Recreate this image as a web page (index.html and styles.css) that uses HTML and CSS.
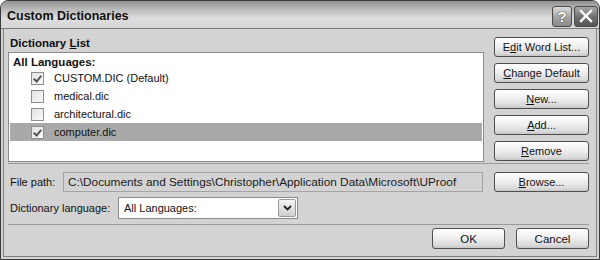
FILE: index.html
```html
<!DOCTYPE html>
<html lang="en">
<head>
  <meta charset="UTF-8" />
  <title>Custom Dictionaries</title>
  <link rel="stylesheet" href="styles.css">
</head>
<body>
  <div class="window">
    <!-- Title bar -->
    <div class="titlebar">
      <span class="title">Custom Dictionaries</span>
      <div class="title-buttons">
        <span class="tbtn help">?</span>
        <span class="tbtn close">
          <svg width="14" height="14" viewBox="0 0 14 14">
            <path d="M2 2 L12 12 M12 2 L2 12" stroke="#fff" stroke-width="2.4" stroke-linecap="square" fill="none"/>
          </svg>
        </span>
      </div>
    </div>

    <div class="frame">
      <div class="content">
        <!-- List and side buttons -->
        <div class="top">
          <div class="list-col">
            <div class="group-label">Dictionary <u>L</u>ist</div>
            <div class="listbox">
              <div class="list-head">All Languages:</div>
              <div class="item"><span class="check on"></span>CUSTOM.DIC (Default)</div>
              <div class="item"><span class="check"></span>medical.dic</div>
              <div class="item"><span class="check"></span>architectural.dic</div>
              <div class="item selected"><span class="check on"></span>computer.dic</div>
            </div>
          </div>
          <div class="btn-col">
            <button class="btn">E<u>d</u>it Word List...</button>
            <button class="btn"><u>C</u>hange Default</button>
            <button class="btn"><u>N</u>ew...</button>
            <button class="btn"><u>A</u>dd...</button>
            <button class="btn"><u>R</u>emove</button>
          </div>
        </div>

        <div class="sep"></div>

        <!-- File path -->
        <div class="field-row">
          <span class="lbl">File path:</span>
          <div class="path">C:\Documents and Settings\Christopher\Application Data\Microsoft\UProof</div>
          <button class="btn"><u>B</u>rowse...</button>
        </div>

        <!-- Language -->
        <div class="field-row lang">
          <span class="lbl">Dictionary language:</span>
          <div class="select">
            <span class="select-text">All Languages:</span>
            <span class="drop">
              <svg width="9" height="6" viewBox="0 0 9 6">
                <path d="M1 1 L4.5 4.5 L8 1" stroke="#222" stroke-width="1.8" fill="none"/>
              </svg>
            </span>
          </div>
        </div>

        <div class="sep low"></div>

        <!-- OK / Cancel -->
        <div class="actions">
          <button class="btn small">OK</button>
          <button class="btn small">Cancel</button>
        </div>
      </div>
    </div>
  </div>
</body>
</html>
```

FILE: styles.css
```css
/* Reset */
* {
  margin: 0;
  padding: 0;
  box-sizing: border-box;
}
body {
  background: #fff;
  font-family: 'Liberation Sans', Arial, sans-serif;
  font-size: 11px;
  color: #111;
}
u {
  text-decoration: underline;
  text-underline-offset: 1px;
}

/* Window */
.window {
  width: 600px;
  height: 260px;
  border: 1px solid #3a3a3a;
  border-radius: 8px 8px 0 0;
  overflow: hidden;
  display: flex;
  flex-direction: column;
  background: #d3d3d3;
}

/* Title bar */
.titlebar {
  height: 28px;
  flex-shrink: 0;
  border-bottom: 1px solid #7c7c7c;
  background: linear-gradient(to bottom, #8f8f8f 0%, #b9b9b9 30%, #dedede 65%, #d6d6d6 100%);
  display: flex;
  align-items: center;
  justify-content: space-between;
  padding: 0 1px 0 6px;
}
.title {
  font-weight: bold;
  font-size: 12.5px;
  color: #101010;
  padding-top: 2px;
}
.title-buttons {
  display: flex;
  gap: 2px;
  padding-top: 3px;
}
.tbtn {
  height: 21px;
  border: 1px solid #4a4a4a;
  border-radius: 3px;
  display: flex;
  align-items: center;
  justify-content: center;
}
.tbtn.help {
  width: 20px;
  background: linear-gradient(to bottom, #dcdcdc, #a4a4a4 55%, #8a8a8a);
  color: #fff;
  font-weight: bold;
  font-size: 15px;
  text-shadow: 0 0 1px #333, 0 0 1px #333;
}
.tbtn.close {
  width: 24px;
  background: linear-gradient(to bottom, #a8a8a8, #6e6e6e 55%, #555);
}

/* Frame */
.frame {
  flex: 1;
  padding: 0 2px 2px;
  display: flex;
}
.content {
  flex: 1;
  border: 1px solid #808080;
  border-top: none;
  padding: 7px 7px 0 4px;
}

/* Top area */
.top {
  display: flex;
  gap: 10px;
}
.list-col {
  flex: 1;
}
.group-label {
  font-weight: bold;
  font-size: 11.5px;
  line-height: 14px;
  padding-left: 2px;
}
.listbox {
  margin-top: 2px;
  height: 110px;
  background: #fff;
  border: 1px solid #8c8c8c;
  padding: 2px 1px;
}
.list-head {
  font-weight: bold;
  font-size: 11.5px;
  line-height: 14px;
  padding-left: 3px;
}
.item {
  height: 18px;
  display: flex;
  align-items: center;
  gap: 10px;
  padding-left: 21px;
  font-size: 11px;
}
.item.selected {
  background: #a9a9a9;
}
.check {
  width: 13px;
  height: 13px;
  border: 1px solid #8e8e8e;
  background: linear-gradient(135deg, #e2e2e2, #fafafa);
  position: relative;
}
.check.on::after {
  content: "";
  position: absolute;
  left: 3px;
  top: 1px;
  width: 3px;
  height: 6px;
  border: solid #555;
  border-width: 0 2px 2px 0;
  transform: rotate(40deg);
}

/* Buttons */
.btn-col {
  width: 95px;
  display: flex;
  flex-direction: column;
  gap: 6px;
  padding-top: 1px;
}
.btn {
  width: 95px;
  height: 20px;
  border: 1px solid #4e4e4e;
  border-radius: 3px;
  background: linear-gradient(to bottom, #ffffff 0%, #f0f0f0 45%, #dadada 85%, #c6c6c6 100%);
  font-family: inherit;
  font-size: 11px;
  color: #111;
}
.btn.small {
  width: 73px;
  height: 21px;
  font-size: 11.5px;
}

/* Separators */
.sep {
  height: 1px;
  background: #9a9a9a;
  margin-top: 1px;
}
.sep.low {
  margin-top: 5px;
}

/* Field rows */
.field-row {
  display: flex;
  align-items: center;
  margin-top: 7px;
  height: 21px;
}
.lbl {
  width: 55px;
  flex-shrink: 0;
  padding-left: 2px;
  font-size: 11px;
  white-space: nowrap;
}
.path {
  flex: 1;
  height: 20px;
  line-height: 18px;
  background: #d3d3d3;
  border: 1px solid #a4a4a4;
  padding-left: 4px;
  font-size: 11.8px;
  color: #1a1a1a;
  margin-right: 11px;
  white-space: nowrap;
}
.field-row.lang {
  margin-top: 5px;
  height: 22px;
}
.lang .lbl {
  width: 110px;
}
.select {
  width: 180px;
  height: 22px;
  background: #fff;
  border: 1px solid #8a8a8a;
  display: flex;
  align-items: center;
  justify-content: space-between;
  padding: 0 1px 0 5px;
  font-size: 11px;
}
.drop {
  width: 18px;
  height: 18px;
  border: 1px solid #9a9a9a;
  border-radius: 2px;
  background: linear-gradient(to bottom, #f4f4f4, #cfcfcf);
  display: flex;
  align-items: center;
  justify-content: center;
}

/* Bottom buttons */
.actions {
  display: flex;
  justify-content: flex-end;
  gap: 11px;
  margin-top: 3px;
}
```
